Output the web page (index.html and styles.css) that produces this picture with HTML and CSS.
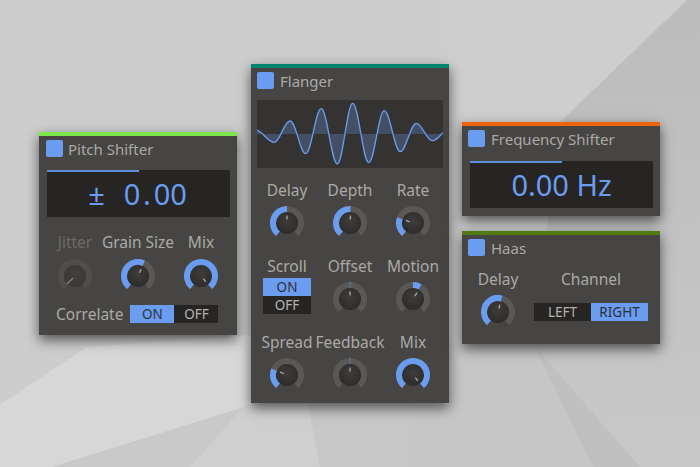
FILE: index.html

```html
<!DOCTYPE html>
<html>
<head>
    <title>Effects Rack</title>
    <link rel="stylesheet" href="styles.css">
</head>
<body>
    <!-- shared knob parts -->
    <svg class="knob-defs" width="0" height="0">
        <defs>
            <radialGradient id="capShade" cx="50%" cy="40%" r="60%">
                <stop offset="0%" stop-color="#3f3d3b"/>
                <stop offset="100%" stop-color="#2e2c2b"/>
            </radialGradient>
            <linearGradient id="rightFacet" x1="0" y1="0" x2="0" y2="1">
                <stop offset="0%" stop-color="#bcbcbc"/>
                <stop offset="100%" stop-color="#c8c8c8"/>
            </linearGradient>
            <path id="knobArc" d="M8 27.72 A14 14 0 1 1 26 27.72" pathLength="280" fill="none" stroke-width="6"/>
            <g id="knobBase">
                <use href="#knobArc" stroke="#5a5856"/>
                <circle cx="17" cy="17" r="11" fill="url(#capShade)"/>
            </g>
            <line id="knobMark" x1="17" y1="13.5" x2="17" y2="9.5" stroke="#aaa8a5" stroke-width="1.3"/>
        </defs>
    </svg>

    <!-- wallpaper facets -->
    <svg class="backdrop" viewBox="0 0 700 467">
        <rect width="700" height="467" fill="#cdcdcd"/>
        <polygon points="443,0 687,0 560,122 462,122 449,64 443,64" fill="#cecece"/>
        <polygon points="687,0 700,0 700,467 640,467 533,344 560,122" fill="url(#rightFacet)"/>
        <polygon points="449,216 462,216 462,405 449,405" fill="#c9c9c9"/>
        <polygon points="449,344 533,344 593,467 413,467 413,405 449,405" fill="#c6c6c6"/>
        <polygon points="533,344 640,467 593,467" fill="#c0c0c0"/>
        <polygon points="0,405 87,347 251,335 251,405 52,467 0,467" fill="#d7d7d7"/>
        <polygon points="251,405 52,467 190,467 245,409" fill="#c9c9c9"/>
        <polygon points="245,405 308,405 320,467 190,467" fill="#cfcfcf"/>
        <polygon points="308,405 413,405 413,467 320,467" fill="#c7c7c7"/>
    </svg>

    <div class="rack">
        <section class="panel pitch">
            <header class="panel-head"><span class="toggle"></span><h2>Pitch Shifter</h2></header>
            <div class="screen screen-pitch">
                <span>±</span>
                <span>0<span class="point">.</span>00</span>
            </div>
            <div class="knob-row row-pitch">
                <div class="cell off">
                    <label>Jitter</label>
                    <svg class="knob" viewBox="0 0 34 34"><use href="#knobBase"/><line x1="15" y1="19" x2="9" y2="25" stroke="#bdbbb8" stroke-width="1.4"/></svg>
                </div>
                <div class="cell">
                    <label>Grain Size</label>
                    <svg class="knob" viewBox="0 0 34 34"><use href="#knobBase"/><use class="arc" href="#knobArc" stroke-dasharray="164 280"/><use href="#knobMark" transform="rotate(24 17 17)"/></svg>
                </div>
                <div class="cell">
                    <label>Mix</label>
                    <svg class="knob" viewBox="0 0 34 34"><use href="#knobBase"/><use class="arc" href="#knobArc" stroke-dasharray="280 280"/><use href="#knobMark" transform="rotate(140 17 17)"/></svg>
                </div>
            </div>
            <div class="correlate">
                <label>Correlate</label>
                <div class="switch switch-wide">
                    <span class="on">ON</span>
                    <span>OFF</span>
                </div>
            </div>
        </section>

        <section class="panel flanger">
            <header class="panel-head"><span class="toggle"></span><h2>Flanger</h2></header>
            <svg class="wave" viewBox="0 0 186 68">
                <path class="wave-fill" d="M0 34 L0 30 C6 32 11 42.3 17.3 42.3 C23 42.3 27 21 33 21 C39 21 43 53.7 48.7 53.7 C54.5 53.7 58.5 8.7 64.3 8.7 C70 8.7 74.5 64 80.3 64 C86 64 90 3.3 95.7 3.3 C101.5 3.3 106 62.7 111.7 62.7 C117.5 62.7 121.5 10.7 127.3 10.7 C133 10.7 137.5 51.7 143.3 51.7 C149 51.7 153.5 23.3 159.3 23.3 C165 23.3 169.5 40.7 175.3 40.7 C179.5 40.7 183 35.5 186 32.7 L186 34 Z"/>
                <path class="wave-line" d="M0 30 C6 32 11 42.3 17.3 42.3 C23 42.3 27 21 33 21 C39 21 43 53.7 48.7 53.7 C54.5 53.7 58.5 8.7 64.3 8.7 C70 8.7 74.5 64 80.3 64 C86 64 90 3.3 95.7 3.3 C101.5 3.3 106 62.7 111.7 62.7 C117.5 62.7 121.5 10.7 127.3 10.7 C133 10.7 137.5 51.7 143.3 51.7 C149 51.7 153.5 23.3 159.3 23.3 C165 23.3 169.5 40.7 175.3 40.7 C179.5 40.7 183 35.5 186 32.7"/>
            </svg>
            <div class="knob-grid">
                <div class="cell">
                    <label>Delay</label>
                    <svg class="knob" viewBox="0 0 34 34"><use href="#knobBase"/><use class="arc" href="#knobArc" stroke-dasharray="140 280"/><use href="#knobMark"/></svg>
                </div>
                <div class="cell">
                    <label>Depth</label>
                    <svg class="knob" viewBox="0 0 34 34"><use href="#knobBase"/><use class="arc" href="#knobArc" stroke-dasharray="142 280"/><use href="#knobMark" transform="rotate(4 17 17)"/></svg>
                </div>
                <div class="cell">
                    <label>Rate</label>
                    <svg class="knob" viewBox="0 0 34 34"><use href="#knobBase"/><use class="arc" href="#knobArc" stroke-dasharray="70 280"/><use href="#knobMark" transform="rotate(-70 17 17)"/></svg>
                </div>
                <div class="cell">
                    <label>Scroll</label>
                    <div class="switch switch-stack">
                        <span class="on">ON</span>
                        <span>OFF</span>
                    </div>
                </div>
                <div class="cell">
                    <label>Offset</label>
                    <svg class="knob" viewBox="0 0 34 34"><use href="#knobBase"/><use class="arc" href="#knobArc" stroke-dasharray="0 139 2 280"/><use href="#knobMark"/></svg>
                </div>
                <div class="cell">
                    <label>Motion</label>
                    <svg class="knob" viewBox="0 0 34 34"><use href="#knobBase"/><use class="arc" href="#knobArc" stroke-dasharray="0 140 30 280"/><use href="#knobMark" transform="rotate(32 17 17)"/></svg>
                </div>
                <div class="cell">
                    <label>Spread</label>
                    <svg class="knob" viewBox="0 0 34 34"><use href="#knobBase"/><use class="arc" href="#knobArc" stroke-dasharray="72 280"/><use href="#knobMark" transform="rotate(-68 17 17)"/></svg>
                </div>
                <div class="cell">
                    <label>Feedback</label>
                    <svg class="knob" viewBox="0 0 34 34"><use href="#knobBase"/><use class="arc" href="#knobArc" stroke-dasharray="0 139 2 280"/><use href="#knobMark"/></svg>
                </div>
                <div class="cell">
                    <label>Mix</label>
                    <svg class="knob" viewBox="0 0 34 34"><use href="#knobBase"/><use class="arc" href="#knobArc" stroke-dasharray="280 280"/><use href="#knobMark" transform="rotate(140 17 17)"/></svg>
                </div>
            </div>
        </section>

        <div class="stack">
            <section class="panel freq">
                <header class="panel-head"><span class="toggle"></span><h2>Frequency Shifter</h2></header>
                <div class="screen screen-freq">0.00 Hz</div>
            </section>

            <section class="panel haas">
                <header class="panel-head"><span class="toggle"></span><h2>Haas</h2></header>
                <div class="haas-row">
                    <div class="cell">
                        <label>Delay</label>
                        <svg class="knob" viewBox="0 0 34 34"><use href="#knobBase"/><use class="arc" href="#knobArc" stroke-dasharray="155 280"/><use href="#knobMark" transform="rotate(15 17 17)"/></svg>
                    </div>
                    <div class="channel">
                        <label>Channel</label>
                        <div class="switch switch-channel">
                            <span>LEFT</span>
                            <span class="on">RIGHT</span>
                        </div>
                    </div>
                </div>
            </section>
        </div>
    </div>
</body>
</html>
```

FILE: styles.css

```css
html, body {
    height: 100%;
}

body {
    margin: 0;
    position: relative;
    overflow: hidden;
    font-family: "Noto Sans", "Open Sans", sans-serif;
    font-size: 15.5px;
    color: #aba9a5;
    background-color: #cdcdcd;
}

.knob-defs {
    position: absolute;
}

.backdrop {
    position: absolute;
    top: 0;
    left: 0;
    width: 700px;
    height: 467px;
}

.rack {
    position: relative;
    box-sizing: border-box;
    height: 467px;
    padding-right: 1px;
    display: flex;
    justify-content: center;
    align-items: center;
    gap: 14px;
}

.stack {
    display: flex;
    flex-direction: column;
    gap: 15px;
    margin-left: -1px;
    margin-top: -1px;
}

.panel {
    box-sizing: border-box;
    width: 198px;
    padding-top: 4px;
    background-color: #474543;
    border-top: 4px solid #888;
    box-shadow: 0px 5px 12px rgba(0, 0, 0, 0.6);
}

.pitch { height: 203px; border-top-color: #7de84a; }
.flanger { height: 339px; border-top-color: #00866f; }
.freq { height: 94px; border-top-color: #f0620f; }
.haas { height: 113px; border-top-color: #4f7a14; }

.panel-head {
    display: flex;
    align-items: center;
    gap: 6px;
    height: 17px;
    padding-left: 7px;
}

.pitch .panel-head {
    gap: 5px;
}

.flanger .panel-head,
.freq .panel-head,
.haas .panel-head {
    padding-left: 6px;
}

.panel-head h2 {
    margin: 0;
    font-size: 15px;
    font-weight: normal;
    white-space: nowrap;
}

.toggle {
    width: 17px;
    height: 17px;
    border-radius: 2px;
    background-color: #6a9cf0;
}

label {
    display: block;
    height: 20px;
    line-height: 20px;
    white-space: nowrap;
}

.screen {
    box-sizing: border-box;
    position: relative;
    width: 183px;
    height: 47px;
    margin: 13px 0 0 8px;
    display: flex;
    justify-content: center;
    align-items: center;
    background-color: #262524;
    color: #6a9cf0;
    font-size: 29px;
}

.screen-freq {
    margin-top: 14px;
}

/* half-full level line along the top of the readout */
.screen::before {
    content: "";
    position: absolute;
    top: 0;
    left: 0;
    width: 50%;
    height: 2px;
    background-color: #5f8fdc;
}

.screen-pitch {
    gap: 19px;
    padding-right: 2px;
}

.point {
    margin: 0 2.75px;
}

.knob-row,
.knob-grid {
    display: grid;
    grid-template-columns: repeat(3, 63px);
    justify-content: center;
}

.row-pitch {
    margin-top: 15px;
}

.knob-grid {
    row-gap: 16px;
    margin-top: 12px;
}

.cell {
    display: flex;
    flex-direction: column;
    align-items: center;
    gap: 6px;
}

.row-pitch .cell {
    gap: 7px;
}

.cell.off label {
    color: #6b6967;
}

.cell.off .knob {
    opacity: 0.5;
}

.knob {
    display: block;
    width: 34px;
    height: 34px;
}

.arc {
    stroke: #6a9cf0;
}

.wave {
    display: block;
    width: 186px;
    height: 68px;
    margin: 11px 0 0 6px;
    background-color: #353331;
}

.wave-fill {
    fill: rgba(106, 156, 240, 0.28);
}

.wave-line {
    fill: none;
    stroke: #6a9cf0;
    stroke-width: 1.3;
}

.switch {
    display: flex;
    background-color: #262524;
    font-size: 13.5px;
    color: #b5b3b0;
}

.switch span {
    flex: 1;
    height: 18px;
    line-height: 18px;
    text-align: center;
}

.switch .on {
    background-color: #6a9cf0;
    color: #2f3136;
}

.switch-wide { width: 88px; }
.switch-channel { width: 114px; }

.switch-stack {
    flex-direction: column;
    width: 48px;
    margin-top: -4px;
}

.switch-stack span {
    flex: none;
}

.correlate {
    display: flex;
    align-items: center;
    gap: 7px;
    margin-top: 11px;
    padding-left: 17px;
}

.haas-row {
    display: flex;
    gap: 4.5px;
    margin-top: 13px;
    padding-left: 4.5px;
}

.haas-row .cell {
    width: 63px;
}

.channel {
    display: flex;
    flex-direction: column;
    align-items: center;
    gap: 14px;
}
```
